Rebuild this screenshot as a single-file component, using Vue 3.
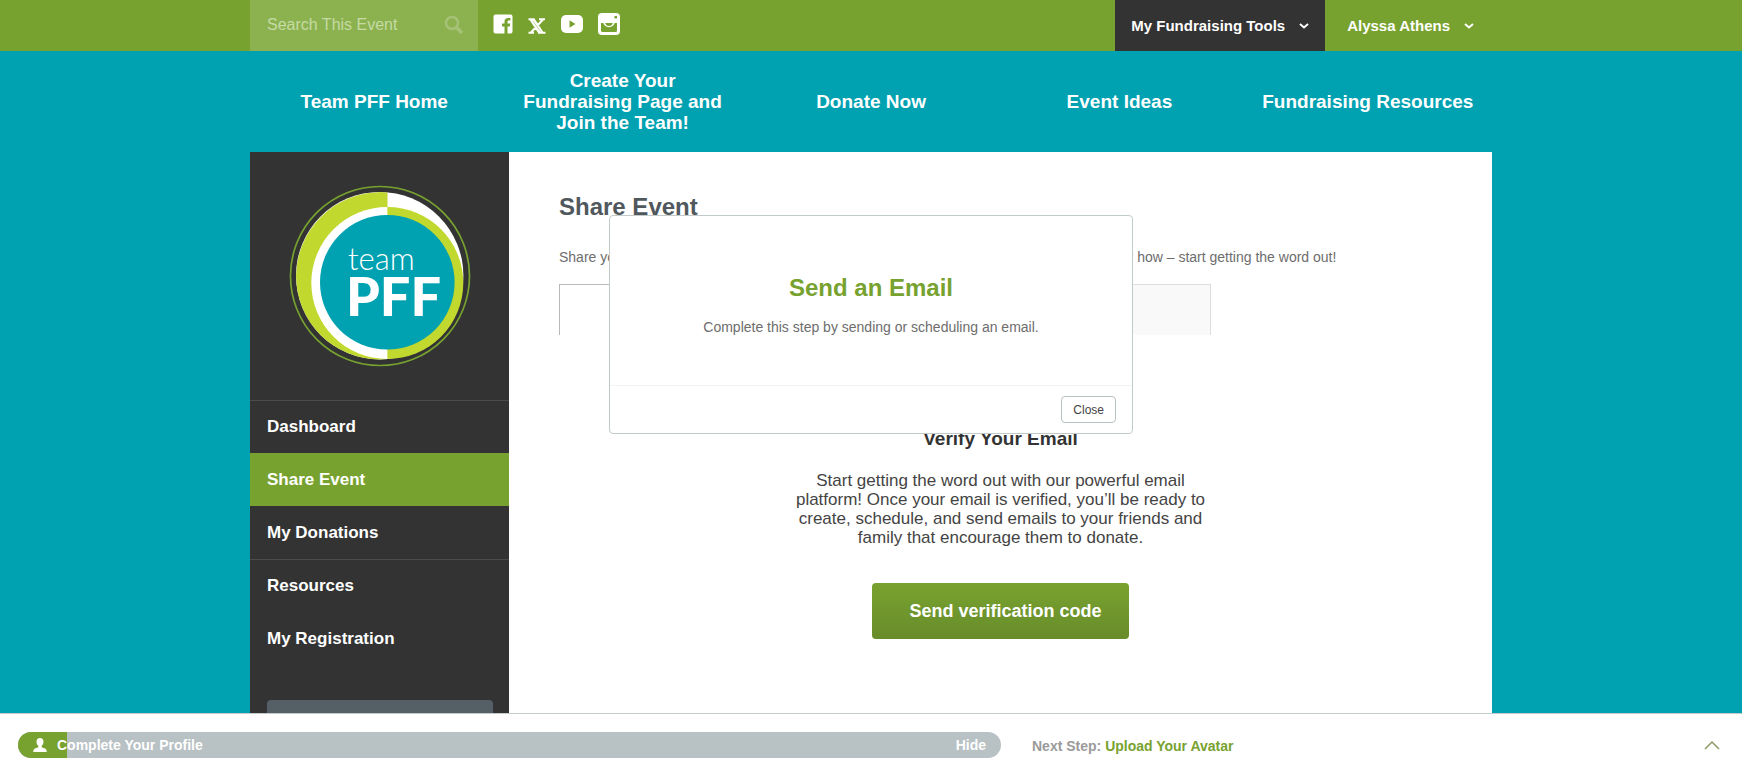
<script setup>
import { ref } from "vue";

const search = ref("");
const isModalOpen = ref(true);
const isProgressHidden = ref(false);
const progress = ref(5);

const navLinks = [
  "Team PFF Home",
  "Create Your Fundraising Page and Join the Team!",
  "Donate Now",
  "Event Ideas",
  "Fundraising Resources",
];

const menu = [
  { label: "Dashboard", divider: true },
  { label: "Share Event", active: true },
  { label: "My Donations" },
  { label: "Resources", divider: true },
  { label: "My Registration" },
];

const closeModal = () => {
  isModalOpen.value = false;
};
</script>

<template>
  <div class="page">
    <header class="topbar">
      <div class="container topbar-inner">
        <form class="search" @submit.prevent>
          <input
            v-model="search"
            type="text"
            aria-label="Search This Event"
            placeholder="Search This Event"
          />
          <button type="submit" aria-label="Search">
            <svg width="20" height="20" viewBox="0 0 20 20">
              <circle cx="8" cy="8" r="6" fill="none" stroke="#a5c276" stroke-width="2.500" />
              <path d="M12 12l6 6" stroke="#a5c276" stroke-width="3.500" />
            </svg>
          </button>
        </form>
        <div class="social">
          <a href="#" aria-label="Facebook">
            <svg width="20" height="20" viewBox="0 0 20 20">
              <path
                fill="#fff"
                d="M2.500 0.500h15a2 2 0 0 1 2 2v15a2 2 0 0 1-2 2H14.500v-7h2.300l.4-2.900h-2.700V8c0-.9.3-1.400 1.400-1.400h1.500V4c-.4 0-1.200-.1-2.200-.1-2.200 0-3.700 1.300-3.700 3.700v2H9v2.900h2.500v7h-9a2 2 0 0 1-2-2v-15a2 2 0 0 1 2-2z"
              />
            </svg>
          </a>
          <a href="#" aria-label="X" class="x-link">
            <svg width="18" height="16" viewBox="0 0 18 16">
              <path
                d="M2.500 1.500h3.500l8.500 13h-3.500zM4.300 2l8.500 12.500M15 1.500L3 14.500M0.500 1.200h6M11 1.200h6M0.500 14.800h5.500M10 14.800h7.500"
                fill="none"
                stroke="#fff"
                stroke-width="2"
              />
              <path d="M5 3l7.500 10.500" stroke="#a9c57c" stroke-width="0.700" />
            </svg>
          </a>
          <a href="#" aria-label="YouTube">
            <svg width="22" height="18" viewBox="0 0 22 18">
              <rect width="22" height="18" rx="5" fill="#fff" />
              <path d="M8.500 5.300v7.400l6-3.700z" fill="#78a22f" />
            </svg>
          </a>
          <a href="#" aria-label="Instagram">
            <svg width="22" height="22" viewBox="0 0 22 22">
              <rect width="22" height="22" rx="4" fill="#fff" />
              <path
                fill="#78a22f"
                d="M3 10h2.300a6 6 0 0 0 11.400 0H19v7.500a1.500 1.500 0 0 1-1.500 1.500h-13A1.500 1.500 0 0 1 3 17.500zM7.200 10h7.600a3.900 3.900 0 0 1-7.600 0zM16.500 3h2.500v2.500h-2.500z"
              />
            </svg>
          </a>
        </div>
        <div class="account">
          <button type="button" class="account-btn dark">
            My Fundraising Tools
            <svg width="10" height="6" viewBox="0 0 10 6">
              <path d="M1 1l4 3.500L9 1" fill="none" stroke="#fff" stroke-width="2" />
            </svg>
          </button>
          <button type="button" class="account-btn">
            Alyssa Athens
            <svg width="10" height="6" viewBox="0 0 10 6">
              <path d="M1 1l4 3.500L9 1" fill="none" stroke="#fff" stroke-width="2" />
            </svg>
          </button>
        </div>
      </div>
    </header>

    <div class="scroll-area">
      <nav class="container main-nav">
        <a v-for="link in navLinks" :key="link" href="#">{{ link }}</a>
      </nav>

      <div class="container columns">
        <aside class="sidebar">
          <div class="logo">
            <svg width="182" height="182" viewBox="0 0 182 182" role="img" aria-label="team PFF">
              <defs>
                <clipPath id="disc"><circle cx="90.700" cy="90.700" r="83.700" /></clipPath>
                <clipPath id="leftHalf"><rect width="98.500" height="182" /></clipPath>
                <clipPath id="rightHalf"><rect x="98.500" width="84" height="182" /></clipPath>
              </defs>
              <circle cx="91" cy="91" r="89.500" fill="none" stroke="#78a22f" stroke-width="1.700" />
              <circle cx="90.700" cy="90.700" r="83.700" fill="#fff" />
              <g clip-path="url(#leftHalf)">
                <g clip-path="url(#disc)">
                  <circle cx="92" cy="92" r="85" fill="#c1d82f" />
                  <circle cx="98.300" cy="98" r="76" fill="#fff" />
                </g>
              </g>
              <circle cx="98.300" cy="98" r="76" fill="#c1d82f" clip-path="url(#rightHalf)" />
              <circle cx="98.300" cy="97.300" r="67.300" fill="#00a1b1" />
              <text x="59" y="85" class="logo-team">team</text>
              <text x="57" y="131" class="logo-pff">PFF</text>
            </svg>
          </div>
          <ul class="menu">
            <li v-for="item in menu" :key="item.label">
              <a href="#" :class="{ active: item.active, divider: item.divider }">{{ item.label }}</a>
            </li>
          </ul>
          <button type="button" class="side-btn" aria-label="More"></button>
        </aside>

        <main class="content">
          <h1>Share Event</h1>
          <p class="intro">
            Share your event with friends and close family by email, social media or in person. No
            matter how – start getting the word out!
          </p>
          <div class="tabs">
            <button type="button" class="tab current" aria-label="Email"></button>
            <button type="button" class="tab" aria-label="Social"></button>
          </div>
          <section class="verify">
            <h2>Verify Your Email</h2>
            <p>
              Start getting the word out with our powerful email platform! Once your email is
              verified, you’ll be ready to create, schedule, and send emails to your friends and
              family that encourage them to donate.
            </p>
            <button type="button" class="verify-btn">Send verification code</button>
          </section>
        </main>
      </div>
    </div>

    <footer class="progress-bar">
      <div v-if="!isProgressHidden" class="track">
        <div class="fill" :style="{ width: progress + '%' }"></div>
        <div class="track-label">
          <svg width="14" height="14" viewBox="0 0 14 14">
            <path
              fill="#fff"
              d="M7 0c2.200 0 3.500 1.500 3.500 3.700 0 1.800-.8 3.200-1.800 4v1.500c1.300.8 4.300 1 4.800 2.800.2.600.2 1.300.2 2H.3c0-.7 0-1.400.2-2 .5-1.800 3.500-2 4.800-2.800V7.700c-1-.8-1.800-2.200-1.800-4C3.500 1.500 4.800 0 7 0z"
            />
          </svg>
          <span>Complete Your Profile</span>
          <button type="button" @click="isProgressHidden = true">Hide</button>
        </div>
      </div>
      <p class="next-step">Next Step: <a href="#">Upload Your Avatar</a></p>
      <button type="button" class="expand" aria-label="Expand">
        <svg width="16" height="10" viewBox="0 0 16 10">
          <path d="M1 9l7-7 7 7" fill="none" stroke="#8a9a62" stroke-width="1.500" />
        </svg>
      </button>
    </footer>

    <div v-if="isModalOpen" class="modal-layer">
      <div class="modal" role="dialog" aria-labelledby="modal-title">
        <div class="modal-body">
          <h2 id="modal-title">Send an Email</h2>
          <p>Complete this step by sending or scheduling an email.</p>
        </div>
        <div class="modal-footer">
          <button type="button" @click="closeModal">Close</button>
        </div>
      </div>
    </div>
  </div>
</template>

<style>
body {
  margin: 0;
  background: #00a1b1;
}
</style>

<style scoped>
.page {
  display: flex;
  flex-direction: column;
  height: 100vh;
  font-family: "Liberation Sans", Arial, Helvetica, sans-serif;
  background: #00a1b1;
}

h1,
h2,
p,
ul {
  margin: 0;
  padding: 0;
}

a {
  color: inherit;
  text-decoration: none;
}

button,
input {
  font-family: inherit;
  border: 0;
  padding: 0;
  margin: 0;
  background: none;
  color: inherit;
}

button {
  cursor: pointer;
}

svg {
  display: block;
}

.container {
  width: 100%;
  max-width: 1242px;
  margin: 0 auto;
}

.topbar {
  background: #78a22f;
}

.topbar-inner {
  display: flex;
  height: 51px;
}

.search {
  display: flex;
  align-items: center;
  box-sizing: border-box;
  width: 228px;
  padding: 0 14px 2px 17px;
  background: #8cb250;
}

.search input {
  flex: 1;
  min-width: 0;
  font-size: 16px;
  color: #fff;
  outline: none;
}

.search input::placeholder {
  color: #c5dba3;
  opacity: 1;
}

.social {
  display: flex;
  align-items: center;
  gap: 15px;
  padding: 0 15px 4px;
}

.x-link {
  padding-top: 4px;
}

.account {
  display: flex;
  margin-left: auto;
}

.account-btn {
  display: flex;
  align-items: center;
  gap: 14px;
  padding: 0 18px 0 22px;
  font-size: 15px;
  font-weight: bold;
  color: #fff;
}

.account-btn.dark {
  padding: 0 16px;
  background: #333;
}

.scroll-area {
  flex: 1;
  min-height: 0;
  display: flex;
  flex-direction: column;
  overflow: hidden;
}

.main-nav {
  display: flex;
  align-items: center;
  flex-shrink: 0;
  min-height: 101px;
}

.main-nav a {
  flex: 1;
  box-sizing: border-box;
  padding: 0 16px;
  font-size: 19px;
  font-weight: bold;
  line-height: 21px;
  text-align: center;
  color: #fff;
}

.columns {
  display: flex;
  flex: 1 0 auto;
}

.sidebar {
  width: 259px;
  flex-shrink: 0;
  background: #333;
}

.logo {
  display: flex;
  justify-content: center;
  padding: 33px 0;
}

.logo-team {
  font-family: Lato, sans-serif;
  font-size: 31px;
  font-weight: 300;
  fill: #fff;
}

.logo-pff {
  font-family: Lato, sans-serif;
  font-size: 54px;
  font-weight: 900;
  fill: #fff;
}

.menu {
  list-style: none;
}

.menu a {
  display: flex;
  align-items: center;
  box-sizing: border-box;
  height: 53px;
  padding: 0 17px;
  border-top: 1px solid transparent;
  font-size: 17px;
  font-weight: bold;
  color: #fff;
}

.menu a.divider {
  border-top-color: #4c4c4c;
}

.menu a.active {
  background: #78a22f;
}

.side-btn {
  display: block;
  width: calc(100% - 33px);
  height: 48px;
  margin: 35px 16px 0 17px;
  border-radius: 4px;
  background: #555f66;
}

.content {
  flex: 1;
  padding: 41px 50px 0;
  background: #fff;
}

.content h1 {
  font-size: 24px;
  line-height: 28px;
  color: #50585d;
}

.intro {
  margin: 26px 0 17px;
  font-size: 14px;
  line-height: 20px;
  color: #6d6d6d;
}

.tabs {
  display: flex;
  max-width: 652px;
}

.tab {
  flex: 1;
  height: 51px;
  border: 1px solid #ddd;
  border-width: 1px 1px 0 0;
  background: #f9f9f9;
}

.tab.current {
  border-width: 1px 0 0 1px;
  border-color: #b5b9bb;
  background: #fff;
}

.verify {
  display: flex;
  flex-direction: column;
  align-items: center;
  margin-top: 93px;
  text-align: center;
}

.verify h2 {
  font-size: 19px;
  line-height: 22px;
  color: #333;
}

.verify p {
  max-width: 420px;
  margin: 21px 0 36px;
  font-size: 17px;
  line-height: 19px;
  color: #444;
}

.verify-btn {
  padding: 0 27px 0 37px;
  height: 56px;
  border-radius: 4px;
  background: linear-gradient(#78a22f, #688c2b);
  font-size: 18px;
  font-weight: bold;
  color: #fff;
}

.progress-bar {
  display: flex;
  align-items: flex-start;
  box-sizing: border-box;
  height: 52px;
  padding: 12px 22px 0 18px;
  border-top: 1px solid #c5cacc;
  background: #fff;
  font-size: 14px;
  font-weight: bold;
}

.track {
  position: relative;
  flex: 0 0 58%;
  max-width: 983px;
  height: 26px;
  margin-top: 6px;
  border-radius: 13px;
  overflow: hidden;
  background: #b8c1c4;
  color: #fff;
}

.fill {
  position: absolute;
  inset: 0 auto 0 0;
  background: #78a22f;
}

.track-label {
  position: relative;
  display: flex;
  align-items: center;
  gap: 10px;
  height: 26px;
  padding: 0 15px;
}

.track-label button {
  margin-left: auto;
  font-size: 14px;
  font-weight: bold;
}

.next-step {
  margin: 6px 0 0 31px;
  line-height: 28px;
  color: #9a9a9a;
}

.next-step a {
  color: #78a22f;
}

.expand {
  margin: 14px 0 0 auto;
}

.modal-layer {
  position: fixed;
  inset: 0;
  display: flex;
  justify-content: center;
  align-items: flex-start;
  padding-top: 215px;
  pointer-events: none;
}

.modal {
  box-sizing: border-box;
  width: 524px;
  border: 1px solid #c3caca;
  border-radius: 4px;
  background: #fff;
  pointer-events: auto;
}

.modal-body {
  padding: 58px 20px 48px;
  text-align: center;
}

.modal-body h2 {
  font-size: 24px;
  line-height: 28px;
  color: #78a22f;
}

.modal-body p {
  margin-top: 15px;
  font-size: 14px;
  line-height: 20px;
  color: #6d6d6d;
}

.modal-footer {
  display: flex;
  justify-content: flex-end;
  padding: 10px 16px;
  border-top: 1px solid #f3f3f3;
}

.modal-footer button {
  height: 27px;
  padding: 0 11px;
  border: 1px solid #b8c1c4;
  border-radius: 4px;
  font-size: 12px;
  color: #444;
}
</style>
